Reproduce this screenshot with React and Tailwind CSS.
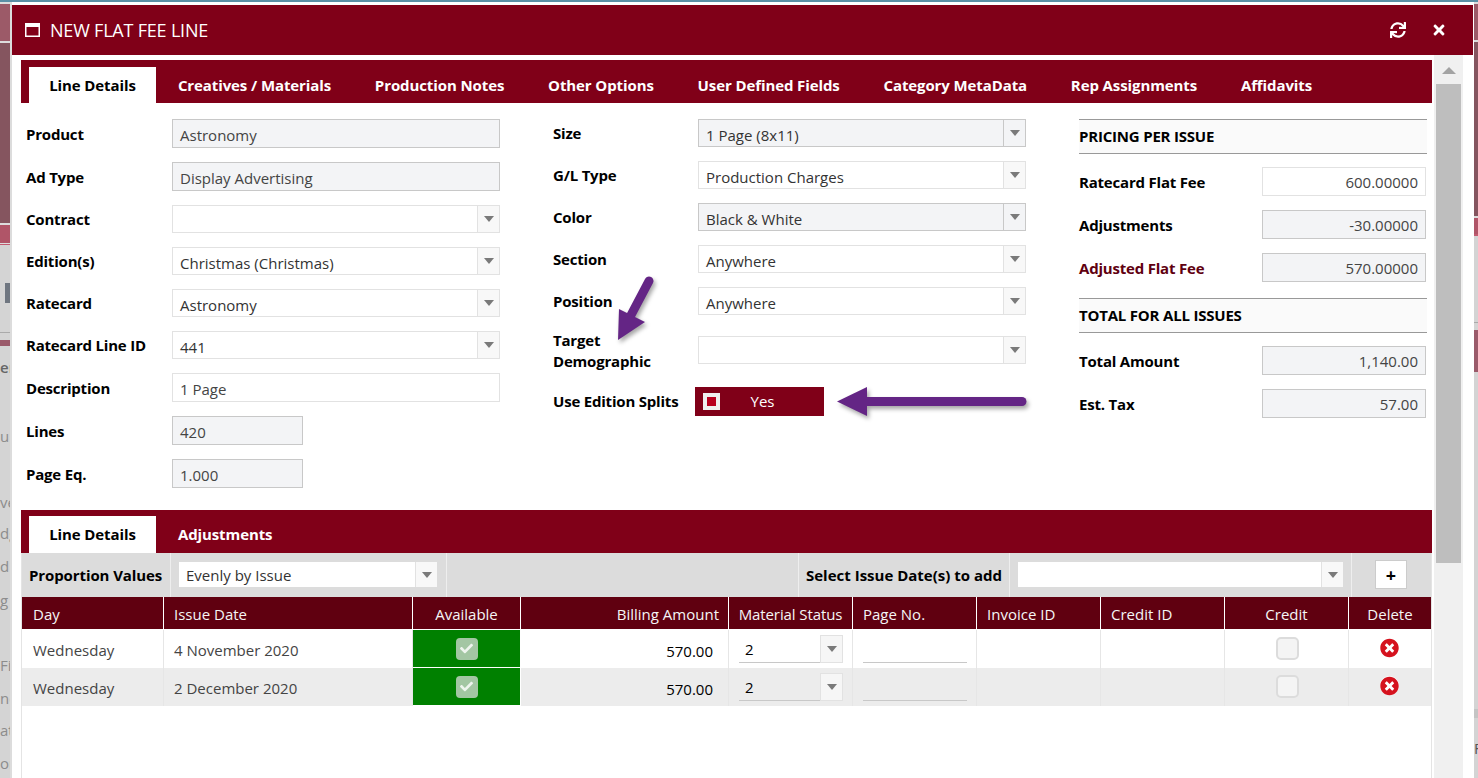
import { FaSync, FaTimes, FaTimesCircle, FaCheck } from 'react-icons/fa'

const MAROON = 'bg-[#800018]'

const TABS = ['Creatives / Materials', 'Production Notes', 'Other Options', 'User Defined Fields', 'Category MetaData', 'Rep Assignments', 'Affidavits']

// grey fragments of the page behind the modal
const BEHIND_LEFT = [
  { text: 'er', cls: 'mt-[9px] font-semibold text-[#666]' },
  { text: 'up', cls: 'mt-[45px]' },
  { text: 've', cls: 'mt-[42px]' },
  { text: 'dg', cls: 'mt-[7px]' },
  { text: 'd', cls: 'mt-[9px]' },
  { text: 'g A', cls: 'mt-[10px]' },
  { text: 'Fi', cls: 'mt-[41px]' },
  { text: 'ne', cls: 'mt-[9px]' },
  { text: 'at', cls: 'mt-[8px]' },
  { text: 'on', cls: 'mt-[9px]' },
]

function Arrow() {
  return (
    <svg width="10" height="6" viewBox="0 0 10 6" className="shrink-0">
      <path d="M0 0h10L5 6z" fill="#7a7a7a" />
    </svg>
  )
}

function Select({ value = '', disabled, valueClass = 'pt-[4px]', className = 'w-[328px] h-[28px]' }) {
  return (
    <div className={`flex border ${disabled ? 'bg-[#f3f4f6] border-[#c8c8c8]' : 'bg-white border-[#e2e2e2]'} ${className}`}>
      <span className={`flex-1 pl-[7px] text-[#333] truncate ${valueClass}`}>{value}</span>
      <span className={`w-[22px] border-l flex items-center justify-center ${disabled ? 'border-[#c8c8c8]' : 'border-[#e2e2e2] bg-[#f8f8f8]'}`}>
        <Arrow />
      </span>
    </div>
  )
}

function TextBox({ value, disabled, right, className = 'w-[328px]' }) {
  return (
    <div className={`h-[29px] border ${right ? 'pt-[3px] text-right pr-[7px]' : 'pt-[4px] pl-[7px]'} ${disabled ? 'bg-[#f3f4f6] border-[#c8c8c8]' : 'bg-white border-[#e2e2e2]'} text-[#444] ${className}`}>
      {value}
    </div>
  )
}

function Label({ children, className = '' }) {
  return <span className={`block font-bold text-black leading-[21px] tracking-[-0.2px] ${className}`}>{children}</span>
}

function Row({ label, labelWidth = 'w-[146px]', labelClass, className = '', children }) {
  return (
    <div className={`flex items-center ${className}`}>
      <div className={`${labelWidth} shrink-0 pt-[1px]`}><Label className={labelClass}>{label}</Label></div>
      {children}
    </div>
  )
}

function SectionHead({ children, className = '' }) {
  return (
    <div className={`h-[35px] border-y border-[#999] bg-[#fafafa] flex items-center font-bold tracking-[-0.2px] text-black ${className}`}>{children}</div>
  )
}

function TabBar({ tabs, tabHeight = 'h-[36px]' }) {
  return (
    <div className={`${MAROON} h-[43px] pl-[8px] flex items-end text-[15px] font-bold tracking-[-0.1px] text-white`}>
      <div className={`w-[127px] bg-white text-black flex items-center justify-center ${tabHeight}`}>Line Details</div>
      {tabs.map(t => (
        <div key={t} className={`flex items-center px-[21.9px] whitespace-nowrap ${tabHeight}`}>{t}</div>
      ))}
    </div>
  )
}

const GRID = 'grid grid-cols-[142px_249px_108px_208px_124px_124px_124px_124px_124px_82px]'

function IssueRow({ date, shaded }) {
  const cell = 'border-r border-[#e6e6e6] flex items-center'
  return (
    <div className={`${GRID} h-[38px] text-[#444] ${shaded ? 'bg-[#ececec]' : 'bg-white'}`}>
      <div className={`${cell} pl-[11px] pt-[2px]`}>Wednesday</div>
      <div className={`${cell} pl-[10px] pt-[2px]`}>{date}</div>
      <div className="bg-[#008000] border-b border-r border-white flex items-center justify-center">
        <span className="w-[22px] h-[22px] rounded-[4px] bg-[#a3c6a3] flex items-center justify-center text-[#eef4ee] text-[13px]"><FaCheck /></span>
      </div>
      <div className={`${cell} justify-end pr-[15px] pt-[4px] text-black`}>570.00</div>
      <div className={`${cell} pl-[10px]`}>
        <div className="flex w-[104px] h-[28px] mb-[1px]">
          <span className="flex-1 border-b border-[#c8c8c8] pl-[6px] pt-[3px] text-black">2</span>
          <span className="w-[23px] border border-[#e2e2e2] bg-[#f6f6f6] flex items-center justify-center"><Arrow /></span>
        </div>
      </div>
      <div className={`${cell} pl-[10px]`}><div className="w-[104px] h-[28px] border-b border-[#c8c8c8] mb-[1px]" /></div>
      <div className={cell} />
      <div className={cell} />
      <div className={`${cell} justify-center pl-[1px]`}>
        <span className="w-[23px] h-[23px] rounded-[5px] border-2 border-[#dcdcdc] bg-[#f4f4f4] -mt-[1px]" />
      </div>
      <div className="flex items-start justify-center pt-[8px] pr-[1px]">
        <span className="relative w-[19px] h-[19px] rounded-full bg-white flex items-center justify-center text-[#d5121e] text-[20px]"><FaTimesCircle /></span>
      </div>
    </div>
  )
}

export default function App() {
  const head = 'border-r border-white flex items-center pt-[2px]'
  return (
    <div className="relative h-[778px] w-[1478px] overflow-hidden bg-white font-['Open_Sans',sans-serif] text-[15px] flex flex-col">
      <div className="h-[2px] bg-[#5a8fa5] shrink-0" />
      <div className="flex-1 flex min-h-0">
        {/* page behind, left edge */}
        <div className="w-[12px] shrink-0 bg-[#dcdcdc] pr-[2px]">
          <div className="h-[2px] bg-[#ddd]" />
          <div className="h-[37px] bg-[#9c5a68]" />
          <div className="h-[2px] bg-[#ddd]" />
          <div className="h-[180px] bg-[#85555f]" />
          <div className="h-[2px] bg-[#ddd]" />
          <div className="h-[18px] bg-[#b05568]" />
          <div className="h-[1px] bg-[#ddd]" />
          <div className="h-[1px] bg-[#c25a70]" />
          <div className="h-[87px] bg-[#d4d4d4] flex flex-col items-end pt-[38px]">
            <div className="w-[5px] h-[20px] bg-[#6f7680]" />
          </div>
          <div className="h-[1px] bg-[#aaa]" />
          <div className="h-[7px] bg-[#d4d4d4]" />
          <div className="h-[6px] bg-[#9a5a6a]" />
          <div className="h-[432px] bg-[#d4d4d4] flex flex-col items-start overflow-hidden text-[#8c8c8c]">
            {BEHIND_LEFT.map(f => (
              <div key={f.text} className={`h-[24px] leading-[24px] whitespace-nowrap ${f.cls}`}>{f.text}</div>
            ))}
          </div>
        </div>

        {/* modal */}
        <div className="w-[1461px] shrink-0 mt-[3px] flex flex-col min-h-0">
          <div className={`${MAROON} h-[50px] shrink-0 flex items-center text-white`}>
            <svg width="15" height="14" viewBox="0 0 15 14" className="ml-[13px]">
              <path d="M0 0h15v14H0z M1.5 4v8.5h12V4z" fill="#fff" fillRule="evenodd" />
            </svg>
            <span className="ml-[10px] text-[18px] leading-none tracking-[-0.2px]">NEW FLAT FEE LINE</span>
            <span className="ml-auto text-[16px]"><FaSync /></span>
            <span className="ml-[25px] mr-[26px] text-[16px]"><FaTimes /></span>
          </div>

          <div className="flex-1 flex min-h-0">
            <div className="w-[1422px] shrink-0 pl-[9px] pr-[2px] pt-[5px]">
              <TabBar tabs={TABS} />

              <div className="h-[407px] flex pt-[16px] pl-[5px]">
                {/* left column */}
                <div className="w-[474px] flex flex-col gap-[14px]">
                  <Row label="Product"><TextBox value="Astronomy" disabled /></Row>
                  <Row label="Ad Type"><TextBox value="Display Advertising" disabled /></Row>
                  <Row label="Contract"><Select /></Row>
                  <Row label="Edition(s)"><Select value="Christmas (Christmas)" /></Row>
                  <Row label="Ratecard"><Select value="Astronomy" /></Row>
                  <Row label="Ratecard Line ID"><Select value="441" /></Row>
                  <Row label="Description"><TextBox value="1 Page" /></Row>
                  <Row label="Lines"><TextBox value="420" disabled className="w-[131px]" /></Row>
                  <Row label="Page Eq."><TextBox value="1.000" disabled className="w-[131px]" /></Row>
                </div>

                {/* middle column */}
                <div className="w-[473px] ml-[53px] flex flex-col gap-[14px]">
                  <Row label="Size" labelWidth="w-[145px]"><Select value="1 Page (8x11)" disabled /></Row>
                  <Row label="G/L Type" labelWidth="w-[145px]"><Select value="Production Charges" /></Row>
                  <Row label="Color" labelWidth="w-[145px]"><Select value="Black &amp; White" disabled /></Row>
                  <Row label="Section" labelWidth="w-[145px]"><Select value="Anywhere" /></Row>
                  <Row label="Position" labelWidth="w-[145px]"><Select value="Anywhere" /></Row>
                  <Row label={<>Target<br />Demographic</>} labelWidth="w-[145px]" className="h-[42px]"><Select /></Row>
                  <div className="flex items-center h-[29px] mt-[2px]">
                    <div className="w-[142px]"><Label>Use Edition Splits</Label></div>
                    <div className={`${MAROON} w-[129px] h-[29px] flex items-center pl-[8px] text-white`}>
                      <span className="w-[17px] h-[17px] bg-[#b8001f] border-[4px] border-[#f0f0f0]" />
                      <span className="flex-1 text-center pr-[19px]">Yes</span>
                    </div>
                  </div>
                </div>

                {/* pricing column */}
                <div className="w-[348px] ml-[53px]">
                  <SectionHead>PRICING PER ISSUE</SectionHead>
                  <div className="flex flex-col gap-[14px] mt-[13px]">
                    <Row label="Ratecard Flat Fee" labelWidth="w-[183px]"><TextBox value="600.00000" right className="w-[164px]" /></Row>
                    <Row label="Adjustments" labelWidth="w-[183px]"><TextBox value="-30.00000" disabled right className="w-[164px]" /></Row>
                    <Row label="Adjusted Flat Fee" labelWidth="w-[183px]" labelClass="!text-[#600010]"><TextBox value="570.00000" disabled right className="w-[164px]" /></Row>
                  </div>
                  <SectionHead className="mt-[16px]">TOTAL FOR ALL ISSUES</SectionHead>
                  <div className="flex flex-col gap-[14px] mt-[13px]">
                    <Row label="Total Amount" labelWidth="w-[183px]"><TextBox value="1,140.00" disabled right className="w-[164px]" /></Row>
                    <Row label="Est. Tax" labelWidth="w-[183px]"><TextBox value="57.00" disabled right className="w-[164px]" /></Row>
                  </div>
                </div>
              </div>

              <TabBar tabs={['Adjustments']} tabHeight="h-[37px]" />

              <div className="border-x border-[#e4e4e4] h-[225px]">
                <div className="h-[44px] bg-[#dcdcdc] flex text-black">
                  <div className="w-[149px] border-r border-[#eee] flex items-center pl-[7px] font-bold tracking-[-0.1px] whitespace-nowrap">Proportion Values</div>
                  <div className="w-[276px] border-r border-[#eee] pl-[7px] pt-[8px]">
                    <Select value="Evenly by Issue" valueClass="pt-[2px]" className="w-[260px] h-[27px] !border-[#dcdcdc]" />
                  </div>
                  <div className="w-[352px] border-r border-[#eee]" />
                  <div className="w-[211px] border-r border-[#eee] flex items-center justify-center font-bold whitespace-nowrap">Select Issue Date(s) to add</div>
                  <div className="w-[342px] border-r border-[#eee] pl-[7px] pt-[8px]">
                    <Select className="w-[327px] h-[27px] !border-[#dcdcdc]" />
                  </div>
                  <div className="flex-1 pl-[23px] pt-[7px]">
                    <div className="w-[32px] h-[29px] bg-white border border-[#ccc] flex items-center justify-center text-[18px] font-bold leading-none">+</div>
                  </div>
                </div>

                <div className={`${GRID} h-[33px] bg-[#600010] text-[#f5f5f5] border-b border-white`}>
                  <div className={`${head} pl-[11px]`}>Day</div>
                  <div className={`${head} pl-[10px]`}>Issue Date</div>
                  <div className={`${head} justify-center`}>Available</div>
                  <div className={`${head} justify-end pr-[9px]`}>Billing Amount</div>
                  <div className={`${head} justify-center whitespace-nowrap tracking-[-0.1px]`}>Material Status</div>
                  <div className={`${head} pl-[10px]`}>Page No.</div>
                  <div className={`${head} pl-[10px]`}>Invoice ID</div>
                  <div className={`${head} pl-[10px]`}>Credit ID</div>
                  <div className={`${head} justify-center`}>Credit</div>
                  <div className="flex items-center justify-center pt-[2px]">Delete</div>
                </div>
                <IssueRow date="4 November 2020" />
                <IssueRow date="2 December 2020" shaded />
              </div>
            </div>

            {/* scrollbar */}
            <div className="w-[29px] shrink-0 bg-[#f0f0f0] flex flex-col items-center">
              <svg width="14" height="7" viewBox="0 0 14 7" className="mt-[12px] mb-[10px]">
                <path d="M7 0l7 7H0z" fill="#a3a3a3" />
              </svg>
              <div className="w-[25px] h-[479px] bg-[#bebebe]" />
            </div>
          </div>
        </div>

        {/* page behind, right edge */}
        <div className="flex-1 pl-[1px] flex flex-col">
          <div className="h-[2px] bg-[#ddd]" />
          <div className="h-[37px] bg-[#9c5a68]" />
          <div className="h-[2px] bg-[#ddd]" />
          <div className="h-[180px] bg-[#85555f]" />
          <div className="h-[2px] bg-[#ddd]" />
          <div className="h-[16px] bg-[#b05568]" />
          <div className="h-[2px] bg-[#c25a70]" />
          <div className="h-[89px] bg-[#d4d4d4]" />
          <div className="h-[1px] bg-[#aaa]" />
          <div className="h-[7px] bg-[#d4d4d4]" />
          <div className="h-[43px] bg-[#9a5a6a]" />
          <div className="h-[348px] bg-[#d4d4d4]" />
          <div className="h-[9px] bg-[#c4c4c4]" />
          <div className="flex-1 bg-[#d4d4d4] text-[#555] leading-[60px] whitespace-nowrap">F</div>
        </div>
      </div>

      {/* annotation arrows drawn on top of the form */}
      <svg width="50" height="75" viewBox="0 0 50 75" className="absolute left-[610px] top-[272px] drop-shadow-[2px_3px_2px_rgba(0,0,0,0.35)]">
        <path d="M39 9L20 45" stroke="#642585" strokeWidth="9" strokeLinecap="round" />
        <path d="M8 68L9 37L35 50z" fill="#642585" />
      </svg>
      <svg width="200" height="36" viewBox="0 0 200 36" className="absolute left-[832px] top-[384px] drop-shadow-[2px_3px_2px_rgba(0,0,0,0.35)]">
        <path d="M30 17.5H190" stroke="#642585" strokeWidth="9" strokeLinecap="round" />
        <path d="M5 17.5L35 3V32z" fill="#642585" />
      </svg>
    </div>
  )
}
